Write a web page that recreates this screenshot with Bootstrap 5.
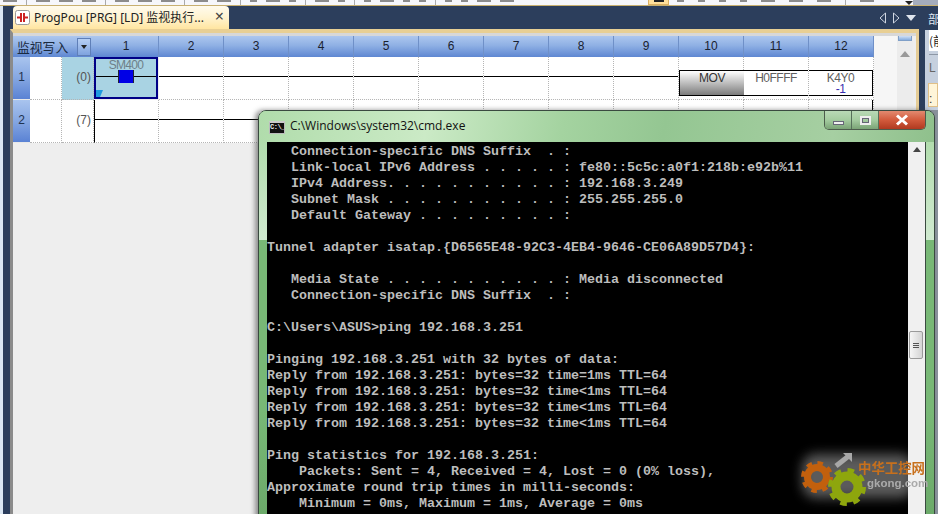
<!DOCTYPE html>
<html lang="zh">
<head>
<meta charset="utf-8">
<title>ProgPou</title>
<link href="https://cdn.jsdelivr.net/npm/bootstrap@5.3.0/dist/css/bootstrap.min.css" rel="stylesheet">
<style>
html,body{margin:0;padding:0;background:#2c3e5c;overflow:hidden}
.app{width:938px;height:514px;position:relative;overflow:hidden;background:#2c3e5c;font-family:"Liberation Sans","Noto Sans CJK SC",sans-serif;color:#222}
/* toolbar remnant */
.tool-strip{height:6px;flex:none;border-bottom:1px solid #c8b070;background:#f6f7fb}
.tool-left{width:648px;overflow:hidden;gap:9px;padding-left:3px}
.tool-right{width:236px;gap:14px;padding-left:8px;overflow:hidden}
.tk{flex:none;width:14px;height:2px;background:#8c8c8c}
.tk-s{width:7px}
.tsep{flex:none;width:1px;height:5px;background:#aaa}
.torange{flex:none;width:21px;height:5px;background:#ffdf9a;border:1px solid #dcb060;border-top:0;display:flex;justify-content:center}
.torange i{display:block;width:10px;height:2px;background:#222}
.tarrow{flex:none;width:0;height:0;border:4px solid transparent;border-top:4px solid #222;margin-top:1px}
.tool-end{flex:1 1 auto;background:#a4acbc;height:5px}
/* workspace */
.edge-left{width:10px;flex:none;background:linear-gradient(90deg,#dbe7f3 0 3px,#2c3e5c 3px)}
.editor-col{width:909px;flex:none}
.tab-row{height:23px;flex:none}
.doc-tab{width:216px;margin-left:3px;background:linear-gradient(#fffbee,#fff3cf 50%,#ffe5a0);border-radius:4px 4px 0 0;font-family:"Noto Sans","Noto Sans CJK SC",sans-serif;font-size:12px;line-height:23px;color:#222;padding-left:2px;white-space:nowrap}
.doc-tab .tab-x{margin-left:auto;margin-right:5px;font-size:16px;color:#444;line-height:20px}
.tab-ico{margin-top:4px;flex:none}
.tab-nav{margin-left:auto;margin-right:3px;gap:5px}
.frame{flex:1 1 auto;border-top:4px solid #e8cf94;border-left:3px solid #8b8b8b;border-right:3px solid #e6cd96;background:#eeeeee;min-height:0}
.frame-in{padding-top:3px;background:linear-gradient(#d8d8d8 0 3px,transparent 3px);min-height:0}
.ladder-col{width:861px;flex:none}
.ladder{display:grid;grid-template-columns:17px 32px 32px repeat(12,65px);grid-template-rows:21px 43px 43px;width:861px;font-size:12px}
.side-fill{width:23px;flex:none;height:110px;background:#f6f6f6}
.vbar{width:16px;flex:none;background:#ececec;position:relative;height:100%}
.vbar-thumb{height:5px;margin:0 1px;background:linear-gradient(#cfe0f6,#86aee0);border:1px solid #7f9fc8;border-top:0}
.vbar-up{width:0;height:0;border:5px solid transparent;border-bottom:6px solid #999;border-top:0;margin:10px auto 0}
.hc{background:linear-gradient(#adc7ef,#8fb0e4 45%,#5e87d2);border-right:1px solid #6f90c8;text-align:center;line-height:21px;font-size:12px;color:#1a2230}
.hc-lead{grid-column:span 3;border-right:0;text-align:left;padding-left:4px;font-size:12.8px;font-family:"Noto Sans CJK SC",sans-serif;display:flex;align-items:center;justify-content:space-between;padding-right:3px;color:#1a2a40}
.hc-drop{width:14px;height:18px;background:linear-gradient(#b7cff3,#7fa3df);border:1px solid #5f7fb8;display:flex;align-items:center;justify-content:center}
.hc-drop i{display:block;width:0;height:0;border:3px solid transparent;border-top:4px solid #222;border-bottom:0}
.rh{background:linear-gradient(#a9c4ee,#85a7e2 50%,#5a82d4);text-align:center;line-height:41px;border-bottom:1px solid #e8e8e8;color:#1f3350;font-size:12px}
.gc{background-color:#fff;border-right:1px dotted #b5b5b5;border-bottom:1px dotted #b5b5b5}
.gc-num{text-align:right;padding-right:2px;line-height:40px;color:#555;font-size:12px}
.gc-tint{background-color:#a9d3e3}
.wired{background-image:linear-gradient(#000,#000);background-size:100% 1px;background-position:0 19px;background-repeat:no-repeat}
.rail{border-left:1px solid #000}
.rail-r{background-image:linear-gradient(#000,#000);background-size:1px 100%;background-position:63px 0;background-repeat:no-repeat}
.sel{background-color:#a9d3e3;position:relative;border:2px solid #000086;margin-right:1px;background-position:0 17px;height:42px}
.sel-label{color:#6e7f88;font-size:12px;line-height:12px;text-align:center;letter-spacing:-.7px}
.contact{width:14px;height:13px;background:#0000e6;margin:0 auto;margin-top:-1px;box-shadow:-1px 0 0 #223,1px 0 0 #223}
.sel-mark{position:absolute;left:0;bottom:0;width:0;height:0;border-style:solid;border-width:7px 3px 0 4px;border-color:#1e9be0 transparent transparent #1e9be0}
.fb{height:26px;margin-top:13px;border-top:1px solid #000;border-bottom:1px solid #000;text-align:center;font-size:12px;line-height:12px;color:#606060;padding-top:1px;letter-spacing:-.5px}
.fb-mov{border-left:1px solid #000;background:linear-gradient(#fff,#7c7c7c);color:#333;margin-right:-1px}
.fb-end{border-right:1px solid #000}
.fb-sub{color:#3a30b0;display:block;line-height:11px}
.gc-fb{padding:0}
.right-pane{flex:1 1 auto;margin-left:6px;min-width:0}
.rp-title{height:24px;color:#dfe6f0;font-size:12px;font-family:"Noto Sans CJK SC",sans-serif;padding:5px 0 0 3px;line-height:16px;white-space:nowrap;overflow:hidden;flex:none}
.rp-body{flex:1 1 auto;background:linear-gradient(#c6d0de 0 80px,#8a929c 80px);padding-left:4px;font-size:12px;overflow:hidden}
.rp-box{height:21px;background:#fff;font-family:"Noto Sans CJK SC",sans-serif;line-height:21px;overflow:hidden;white-space:nowrap}
.rp-l{border-top:1px solid #8d97a5;height:29px;color:#666;margin-top:3px;line-height:26px}
.rp-note{height:24px;margin-left:-1px;background:#fff5d8;border:1px solid #e0c088;line-height:30px;color:#333}
/* cmd window */
.cmd{position:absolute;left:258px;top:110px;width:677px;height:420px;border:1px solid #3a4a40;border-radius:8px 8px 0 0;background:linear-gradient(#a8d8a2 0,#d0ead0 129px,#78b876 129px,#78b876 300px,#6aa868);box-shadow:-3px 0 5px rgba(60,60,60,.55)}
.cmd-title{height:31px;flex:none;background:linear-gradient(100deg,#b0dcab 0,#cbeac6 25%,#a4d3a0 45%,#94c692 60%,#a6cfa2 85%,#8fc08c);border-radius:7px 7px 0 0;padding-left:10px}
.cmd-ico{flex:none;width:16px;height:13px;margin-top:10px;background:#111;border:1px solid #bbb;border-top:2px solid #ccc;color:#eee;font-size:7px;line-height:9px;font-weight:700;overflow:hidden;text-align:left;font-family:"Liberation Mono",monospace;letter-spacing:-.5px}
.cmd-cap{margin-left:5px;font-size:12px;line-height:30px;color:#111;font-family:"Open Sans",sans-serif}
.cmd-btns{margin-left:auto;margin-right:8px;height:19px;border:1px solid #4c5c4c;border-top:0;border-radius:0 0 5px 5px;overflow:hidden}
.wbtn{width:27px;height:18px;display:flex;align-items:center;justify-content:center;background:linear-gradient(#b9dab6,#a4cca0 50%,#7aa376);border-right:1px solid #56705a}
.wbtn-x{width:46px;border-right:0;background:linear-gradient(#e28a70,#d25a3c 50%,#b03a20)}
.wmin{display:block;width:11px;height:4px;background:#f0f0f0;border:1px solid #667;margin-top:6px}
.wmax{display:block;width:11px;height:9px;border:2px solid #eee;outline:1px solid #667;outline-offset:-3px;background:transparent}
.cmd-main{padding-left:8px;flex:1 1 auto;min-height:0}
.cmd-client{width:641px;flex:none;background:#000;padding:2px 0 0 0;height:380px;overflow:hidden}
.cmd-pre{margin:0;font-family:"Liberation Mono",monospace;font-weight:700;font-size:13.33px;line-height:16px;color:#bdbdbd;white-space:pre;overflow:hidden}
.cmd-sb{width:17px;flex:none;background:#f0f0f0;border-right:1px solid #3a4a40;box-sizing:content-box;position:relative;height:380px}
.sb-arrow{width:0;height:0;border:4px solid transparent;border-bottom:5px solid #444;border-top:0;margin:5px auto 0}
.sb-thumb{position:absolute;left:1px;top:189px;width:14px;height:28px;background:linear-gradient(90deg,#f6f6f6,#d4d4d4);border:1px solid #9a9a9a;border-radius:2px;display:flex;flex-direction:column;gap:1px;align-items:center;justify-content:center}
.sb-thumb i{display:block;width:6px;height:1px;background:#555}
/* watermark */
.wm{position:absolute;left:790px;top:440px;width:140px;height:72px;overflow:visible}
</style>
</head>
<body>
<div class="app d-flex flex-column">
  <div class="tool-strip d-flex">
    <div class="tool-left d-flex align-items-start">
      <span class="tk"></span><span class="tsep"></span><span class="tk"></span><span class="tk"></span><span class="tk"></span><span class="tsep"></span><span class="tk"></span><span class="tk"></span><span class="tk"></span><span class="tsep"></span><span class="tk"></span><span class="tk"></span><span class="tsep"></span><span class="tk tk-s"></span><span class="tk"></span><span class="tk tk-s"></span><span class="tsep"></span><span class="tk"></span><span class="tk tk-s"></span><span class="tsep"></span><span class="tk tk-s"></span><span class="tk"></span><span class="tk tk-s"></span><span class="tk tk-s"></span><span class="tsep"></span><span class="tk tk-s"></span><span class="tk tk-s"></span><span class="tk"></span><span class="tk"></span>
    </div>
    <div class="torange"><i></i></div>
    <div class="tool-right d-flex align-items-start">
      <span class="tk tk-s"></span><span class="tk tk-s"></span><span class="tk tk-s"></span><span class="tk tk-s"></span><span class="tk"></span><span class="tk"></span><span class="tk"></span><span class="tsep"></span><span class="tk"></span>
    </div>
    <span class="tarrow"></span>
    <div class="tool-end"></div>
  </div>
  <div class="d-flex flex-grow-1 overflow-hidden">
    <div class="edge-left"></div>
    <div class="editor-col d-flex flex-column">
      <div class="tab-row d-flex">
        <div class="doc-tab d-flex">
          <svg width="15" height="15" viewBox="0 0 15 15" class="me-1 tab-ico"><rect x=".5" y=".5" width="14" height="14" rx="2" fill="#fff" stroke="#999"/><path d="M2 7.5h3M10 7.5h3" stroke="#c22" stroke-width="2"/><rect x="5" y="3" width="2" height="9" fill="#c22"/><rect x="8" y="3" width="2" height="9" fill="#c22"/></svg>
          <span>ProgPou [PRG] [LD] 监视执行...</span>
          <span class="tab-x">×</span>
        </div>
        <div class="tab-nav d-flex align-items-center">
          <svg width="9" height="12" viewBox="0 0 9 12"><path d="M7.5 1 2 6l5.5 5z" fill="none" stroke="#cfd6e2"/></svg>
          <svg width="9" height="12" viewBox="0 0 9 12"><path d="M1.5 1 7 6l-5.5 5z" fill="none" stroke="#cfd6e2"/></svg>
          <svg width="10" height="6" viewBox="0 0 10 6"><path d="M0 0h10L5 6z" fill="#dfe5ee"/></svg>
        </div>
      </div>
      <div class="frame d-flex flex-column">
        <div class="frame-in d-flex flex-grow-1">
          <div class="ladder-col">
            <div class="ladder">
              <div class="hc hc-lead"><span>监视写入</span><span class="hc-drop"><i></i></span></div>
              <div class="hc">1</div><div class="hc">2</div><div class="hc">3</div><div class="hc">4</div><div class="hc">5</div><div class="hc">6</div><div class="hc">7</div><div class="hc">8</div><div class="hc">9</div><div class="hc">10</div><div class="hc">11</div><div class="hc">12</div>

              <div class="rh">1</div>
              <div class="gc"></div>
              <div class="gc gc-num gc-tint">(0)</div>
              <div class="gc wired sel">
                <div class="sel-label">SM400</div>
                <div class="contact"></div>
                <span class="sel-mark"></span>
              </div>
              <div class="gc wired"></div><div class="gc wired"></div><div class="gc wired"></div><div class="gc wired"></div><div class="gc wired"></div><div class="gc wired"></div><div class="gc wired"></div><div class="gc wired"></div>
              <div class="gc gc-fb"><div class="fb fb-mov">MOV</div></div>
              <div class="gc gc-fb"><div class="fb">H0FFFF</div></div>
              <div class="gc gc-fb"><div class="fb fb-end">K4Y0<span class="fb-sub">-1</span></div></div>

              <div class="rh">2</div>
              <div class="gc"></div>
              <div class="gc gc-num">(7)</div>
              <div class="gc wired rail"></div>
              <div class="gc wired"></div><div class="gc wired"></div><div class="gc wired"></div><div class="gc wired"></div><div class="gc wired"></div><div class="gc wired"></div><div class="gc wired"></div><div class="gc wired"></div>
              <div class="gc"></div><div class="gc"></div><div class="gc rail-r"></div>
            </div>
          </div>
          <div class="side-fill"></div>
          <div class="vbar"><div class="vbar-thumb"></div><div class="vbar-up"></div></div>
        </div>
      </div>
    </div>
    <div class="right-pane d-flex flex-column">
      <div class="rp-title">部</div>
      <div class="rp-body">
        <div class="rp-box">(前</div>
        <div class="rp-l">L</div>
        <div class="rp-note">:</div>
      </div>
    </div>
  </div>

  <div class="cmd d-flex flex-column">
    <div class="cmd-title d-flex">
      <div class="cmd-ico">C:\_</div>
      <div class="cmd-cap">C:\Windows\system32\cmd.exe</div>
      <div class="cmd-btns d-flex">
        <div class="wbtn"><i class="wmin"></i></div>
        <div class="wbtn"><i class="wmax"></i></div>
        <div class="wbtn wbtn-x"><svg width="16" height="12" viewBox="0 0 16 12"><path d="M3 1.5 13 10.5M13 1.5 3 10.5" stroke="#fff" stroke-width="3"/></svg></div>
      </div>
    </div>
    <div class="cmd-main d-flex">
      <div class="cmd-client"><pre class="cmd-pre">   Connection-specific DNS Suffix  . :
   Link-local IPv6 Address . . . . . : fe80::5c5c:a0f1:218b:e92b%11
   IPv4 Address. . . . . . . . . . . : 192.168.3.249
   Subnet Mask . . . . . . . . . . . : 255.255.255.0
   Default Gateway . . . . . . . . . :

Tunnel adapter isatap.{D6565E48-92C3-4EB4-9646-CE06A89D57D4}:

   Media State . . . . . . . . . . . : Media disconnected
   Connection-specific DNS Suffix  . :

C:\Users\ASUS>ping 192.168.3.251

Pinging 192.168.3.251 with 32 bytes of data:
Reply from 192.168.3.251: bytes=32 time=1ms TTL=64
Reply from 192.168.3.251: bytes=32 time&lt;1ms TTL=64
Reply from 192.168.3.251: bytes=32 time&lt;1ms TTL=64
Reply from 192.168.3.251: bytes=32 time&lt;1ms TTL=64

Ping statistics for 192.168.3.251:
    Packets: Sent = 4, Received = 4, Lost = 0 (0% loss),
Approximate round trip times in milli-seconds:
    Minimum = 0ms, Maximum = 1ms, Average = 0ms</pre></div>
      <div class="cmd-sb"><div class="sb-arrow"></div><div class="sb-thumb"><i></i><i></i><i></i></div></div>
    </div>
  </div>

  <svg class="wm" viewBox="0 0 140 72" aria-label="gkong.com">
    <defs>
      <filter id="bl" x="-30%" y="-50%" width="160%" height="200%"><feGaussianBlur stdDeviation="6"/></filter>
      <filter id="sf" x="-5%" y="-5%" width="110%" height="110%"><feGaussianBlur stdDeviation=".5"/></filter>
      <clipPath id="cp"><rect x="0" y="0" width="118" height="72"/></clipPath>
    </defs>
    <g clip-path="url(#cp)"><rect x="12" y="14" width="112" height="44" rx="14" fill="#7a7a7a" opacity=".75" filter="url(#bl)"/></g>
    <g filter="url(#sf)">
    <path d="M46 26 60 15" stroke="#a8a8a8" stroke-width="5" fill="none"/><path d="M53 13h9v9z" fill="#a8a8a8"/>
    <g fill="none">
      <circle cx="27" cy="37" r="9.5" stroke="#c2600f" stroke-width="7"/>
      <circle cx="27" cy="37" r="14" stroke="#c2600f" stroke-width="4" stroke-dasharray="5.5 5.5"/>
      <circle cx="57" cy="47" r="11" stroke="#8ea60c" stroke-width="9"/>
      <circle cx="57" cy="47" r="16.5" stroke="#8ea60c" stroke-width="5" stroke-dasharray="6.5 6.46"/>
    </g>
    <text x="68" y="33" font-family="Noto Sans CJK SC,sans-serif" font-size="13.4" font-weight="700" fill="#c8701c">中华工控网</text>
    <text x="77" y="47" font-family="Liberation Sans,sans-serif" font-size="11.5" font-weight="700" fill="#aaaaaa">gkong.com</text>
    </g>
  </svg>
</div>
</body>
</html>
